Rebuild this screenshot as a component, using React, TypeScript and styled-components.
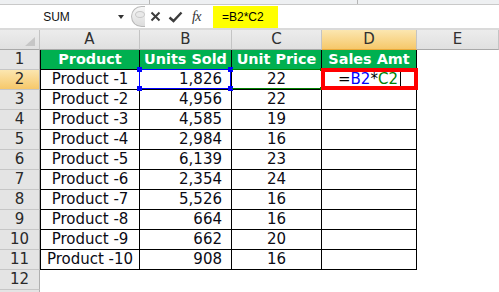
import React from 'react';
import styled, { createGlobalStyle } from 'styled-components';

const GlobalStyle = createGlobalStyle`
    html, body {
        margin: 0;
        padding: 0;
        background: #ffffff;
        overflow: hidden;
    }
    body {
        font-family: "DejaVu Sans", Verdana, sans-serif;
    }
`;

const Page = styled.div`
    width: 499px;
    height: 292px;
    overflow: hidden;
    background: #ffffff;
`;

/* ---------- formula bar ---------- */

const TopStrip = styled.div`
    height: 4px;
    background: #eef0f2;
    border-bottom: 1px solid #c9c9c9;
    display: grid;
    grid-template-columns: 150px 208px 1fr;
`;

const StripMark = styled.div`
    border-right: 1px solid #b5b5b5;
`;

const FormulaBar = styled.div`
    height: 23px;
    display: flex;
    align-items: stretch;
    background: #ffffff;
    font-family: "Liberation Sans", Arial, sans-serif;
    font-size: 12px;
`;

const NameBox = styled.div`
    width: 131px;
    display: flex;
    align-items: center;
`;

const NameText = styled.span`
    width: 113px;
    text-align: center;
    color: #111;
    padding-top: 1px;
`;

const DropArrow = styled.span`
    width: 0;
    height: 0;
    margin-left: 5px;
    border-left: 3px solid transparent;
    border-right: 3px solid transparent;
    border-top: 4px solid #333;
`;

const Knob = styled.div`
    width: 14px;
    height: 21px;
    margin-top: 1px;
    border: 1px solid #b9b9b9;
    border-right: none;
    border-radius: 12px 0 0 12px;
    background: linear-gradient(#f7f7f7, #dcdcdc);
    display: flex;
    justify-content: center;
    padding-top: 4px;
    box-sizing: border-box;
`;

const Dimple = styled.div`
    width: 8px;
    height: 5px;
    border-radius: 50%;
    background: #e9e9e9;
    border: 1px solid #c8c8c8;
    margin-left: 3px;
`;

const IconSlot = styled.div<{ w: number }>`
    width: ${p => p.w}px;
    display: flex;
    align-items: center;
    justify-content: center;
`;

const Fx = styled.span`
    font-family: "Liberation Serif", "Times New Roman", serif;
    font-style: italic;
    font-size: 14px;
    color: #333;
    letter-spacing: -0.5px;
`;

const FormulaInput = styled.div`
    margin-left: 5px;
    margin-top: 1px;
    width: 65px;
    background: #ffff00;
    display: flex;
    align-items: center;
    padding-left: 9px;
    box-sizing: border-box;
    color: #000;
`;

const Separator = styled.div`
    height: 2px;
    background: #dadada;
`;

/* ---------- sheet ---------- */

const Sheet = styled.div`
    display: grid;
    grid-template-columns: 40px 100px 92px 90px 95px 1fr;
    grid-auto-rows: 20px;
    font-size: 15px;
`;

const Corner = styled.div`
    position: relative;
    background: linear-gradient(#ececec, #e0e0e0);
    border-right: 1px solid #c4c4c4;
    border-bottom: 1px solid #a9a9a9;
    box-sizing: border-box;

    &::after {
        content: '';
        position: absolute;
        right: 4px;
        bottom: 3px;
        border-left: 10px solid transparent;
        border-bottom: 9px solid #c6c6c6;
    }
`;

const ColHead = styled.div<{ active?: boolean }>`
    background: ${p => p.active
        ? 'linear-gradient(#fbe6b0, #f6c86a)'
        : 'linear-gradient(#ececec, #e0e0e0)'};
    border-right: 1px solid #c4c4c4;
    border-bottom: 1px solid ${p => p.active ? '#e8a93a' : '#a9a9a9'};
    box-sizing: border-box;
    color: #303030;
    text-align: center;
    line-height: 19px;
`;

const RowHead = styled.div<{ active?: boolean }>`
    background: ${p => p.active
        ? 'linear-gradient(#fbe6b0, #f6c86a)'
        : '#e4e4e4'};
    border-right: 1px solid #b0b0b0;
    border-bottom: 1px solid #c6c6c6;
    box-sizing: border-box;
    color: #2a2a2a;
    text-align: center;
    line-height: 19px;
`;

const Cell = styled.div<{ align?: 'left' | 'center' | 'right'; head?: boolean; first?: boolean }>`
    position: relative;
    background: ${p => p.head ? '#00b050' : '#ffffff'};
    color: ${p => p.head ? '#ffffff' : '#0a0a14'};
    font-weight: ${p => p.head ? 700 : 400};
    font-size: ${p => p.head ? '14.4px' : '15px'};
    text-align: ${p => p.align || 'center'};
    padding-right: ${p => p.align === 'right' ? '9px' : '0'};
    border-right: 1px solid #000;
    border-bottom: 1px solid #000;
    border-left: ${p => p.first ? '1px solid #000' : 'none'};
    box-sizing: border-box;
    line-height: 19px;
    white-space: nowrap;
`;

const Blank = styled.div`
    background: #ffffff;
`;

/* ---------- overlays on the active cells ---------- */

const RefFrame = styled.div<{ color: string }>`
    position: absolute;
    left: -1px;
    top: -1px;
    right: 0;
    bottom: 0;
    border: 1px solid ${p => p.color};
    pointer-events: none;
    z-index: 2;
`;

const RangeLines = styled.div`
    position: absolute;
    left: 0;
    top: -1px;
    right: 0;
    bottom: 0;
    border-top: 1px solid #008000;
    border-bottom: 1px solid #008000;
    pointer-events: none;
    z-index: 2;
`;

const Handle = styled.span<{ color: string; size: number; x: 'l' | 'r'; y: 't' | 'b' }>`
    position: absolute;
    width: ${p => p.size}px;
    height: ${p => p.size}px;
    background: ${p => p.color};
    ${p => p.x === 'l' ? 'left' : 'right'}: ${p => -Math.ceil(p.size / 2)}px;
    ${p => p.y === 't' ? 'top' : 'bottom'}: ${p => -Math.ceil(p.size / 2)}px;
`;

const RedBox = styled.div`
    position: absolute;
    left: -1px;
    top: -2px;
    right: -2px;
    bottom: -1px;
    border: 4px solid #ff0000;
    pointer-events: none;
    z-index: 3;
`;

const EditText = styled.span`
    position: absolute;
    left: 16px;
    top: 0;
    color: #000;
`;

const Ref = styled.span<{ color: string }>`
    color: ${p => p.color};
`;

const Caret = styled.span`
    display: inline-block;
    width: 1px;
    height: 15px;
    margin-left: 2px;
    background: #000;
    vertical-align: -3px;
`;

const products: [string, string, number][] = [
    ['Product -1', '1,826', 22],
    ['Product -2', '4,956', 22],
    ['Product -3', '4,585', 19],
    ['Product -4', '2,984', 16],
    ['Product -5', '6,139', 23],
    ['Product -6', '2,354', 24],
    ['Product -7', '5,526', 16],
    ['Product -8', '664', 16],
    ['Product -9', '662', 20],
    ['Product -10', '908', 16],
];

const columns = ['A', 'B', 'C', 'D', 'E'];

const CrossIcon = () => (
    <svg width="11" height="11" viewBox="0 0 11 11">
        <path d="M1.5 1.5 L9.5 9.5 M9.5 1.5 L1.5 9.5" stroke="#3c3c3c" strokeWidth="2" fill="none" />
    </svg>
);

const CheckIcon = () => (
    <svg width="15" height="12" viewBox="0 0 15 12">
        <path d="M1.5 6.5 L5.5 10 L13.5 1.5" stroke="#3c3c3c" strokeWidth="2.4" fill="none" strokeLinejoin="miter" />
    </svg>
);

export default function App() {
    return (
        <Page>
            <GlobalStyle />
            <TopStrip>
                <StripMark />
                <StripMark />
                <div />
            </TopStrip>
            <FormulaBar>
                <NameBox>
                    <NameText>SUM</NameText>
                    <DropArrow />
                </NameBox>
                <Knob>
                    <Dimple />
                </Knob>
                <IconSlot w={20}><CrossIcon /></IconSlot>
                <IconSlot w={20}><CheckIcon /></IconSlot>
                <IconSlot w={23}><Fx>fx</Fx></IconSlot>
                <FormulaInput>=B2*C2</FormulaInput>
            </FormulaBar>
            <Separator />
            <Sheet>
                <Corner />
                {columns.map(c => (
                    <ColHead key={c} active={c === 'D'}>{c}</ColHead>
                ))}

                <RowHead>1</RowHead>
                <Cell head first>Product</Cell>
                <Cell head>Units Sold</Cell>
                <Cell head>Unit Price</Cell>
                <Cell head>Sales Amt</Cell>
                <Blank />

                {products.map(([name, units, price], i) => {
                    const row = i + 2;
                    const active = row === 2;
                    return (
                        <React.Fragment key={name}>
                            <RowHead active={active}>{row}</RowHead>
                            <Cell first>{name}</Cell>
                            <Cell align="right">
                                {units}
                                {active && (
                                    <RefFrame color="#0000ff">
                                        <Handle color="#0000ff" size={5} x="l" y="t" />
                                        <Handle color="#0000ff" size={5} x="r" y="t" />
                                        <Handle color="#0000ff" size={5} x="l" y="b" />
                                        <Handle color="#0000ff" size={5} x="r" y="b" />
                                    </RefFrame>
                                )}
                            </Cell>
                            <Cell>
                                {price}
                                {active && (
                                    <RangeLines>
                                        <Handle color="#008000" size={3} x="r" y="t" />
                                        <Handle color="#008000" size={3} x="r" y="b" />
                                    </RangeLines>
                                )}
                            </Cell>
                            <Cell>
                                {active && (
                                    <>
                                        <EditText>
                                            =<Ref color="#0000ff">B2</Ref>*<Ref color="#008000">C2</Ref>
                                            <Caret />
                                        </EditText>
                                        <RedBox />
                                    </>
                                )}
                            </Cell>
                            <Blank />
                        </React.Fragment>
                    );
                })}

                <RowHead>12</RowHead>
                <Blank />
                <Blank />
                <Blank />
                <Blank />
                <Blank />
                <RowHead />
            </Sheet>
        </Page>
    );
}
